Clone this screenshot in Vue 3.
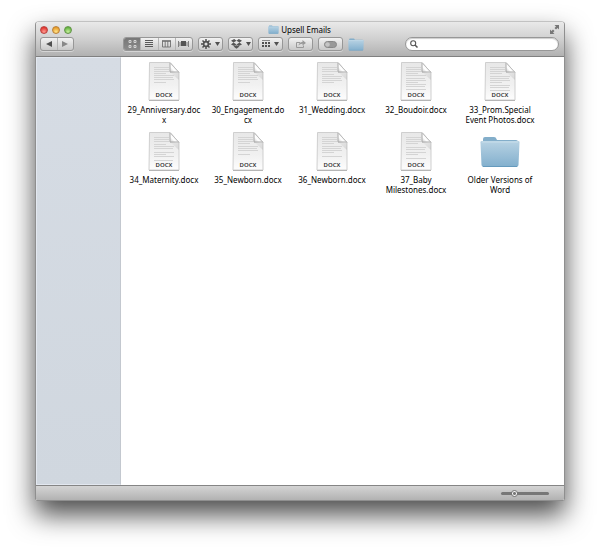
<script setup>
import { ref } from 'vue'

const size = ref(24)
const query = ref('')
const view = ref('icons')
const views = ['icons', 'list', 'columns', 'flow']

const files = [
  { lines: ['29_Anniversary.doc', 'x'], text: [5, 7, 9, 11, 13, 15, 17, 20] },
  { lines: ['30_Engagement.do', 'cx'], text: [5, 7, 9, 11, 13, 15, 17, 20] },
  { lines: ['31_Wedding.docx'], text: [5, 7, 9, 12, 14, 16, 18, 20] },
  { lines: ['32_Boudoir.docx'], text: [5, 7, 9, 11, 13, 16, 18, 20, 22, 24, 27] },
  { lines: ['33_Prom.Special', 'Event Photos.docx'], text: [5, 7, 9, 11, 14, 16, 18, 20, 23, 25, 28] },
  { lines: ['34_Maternity.docx'], text: [5, 7, 9, 12, 14, 16, 20, 22, 24, 28] },
  { lines: ['35_Newborn.docx'], text: [5, 7, 9, 11, 14, 16, 18, 22] },
  { lines: ['36_Newborn.docx'], text: [5, 7, 9, 11, 14, 16, 18, 20, 24] },
  { lines: ['37_Baby', 'Milestones.docx'], text: [5, 7, 9, 11, 15, 17, 20, 22, 26] },
  { lines: ['Older Versions of', 'Word'], folder: true }
]
const lineWidth = (y, i) => (y < 11 ? 15 : [20, 19, 20, 12][i % 4])
</script>

<template>
  <main class="window">
    <svg class="defs" width="0" height="0" aria-hidden="true">
      <defs>
        <linearGradient id="paper" x1="0" y1="0" x2="0" y2="1">
          <stop offset="0" stop-color="#e8e8e8" />
          <stop offset=".6" stop-color="#f1f1f1" />
          <stop offset="1" stop-color="#fdfdfd" />
        </linearGradient>
        <linearGradient id="curl" x1="0" y1="1" x2="1" y2="0">
          <stop offset="0" stop-color="#c4c4c4" />
          <stop offset=".35" stop-color="#fff" />
          <stop offset="1" stop-color="#ddd" />
        </linearGradient>
        <linearGradient id="fold" x1="0" y1="0" x2="1" y2="1">
          <stop offset="0" stop-color="#ddd" />
          <stop offset="1" stop-color="#777" />
        </linearGradient>
        <linearGradient id="blue" x1="0" y1="0" x2="0" y2="1">
          <stop offset="0" stop-color="#b7d2e3" />
          <stop offset="1" stop-color="#82afcd" />
        </linearGradient>
        <symbol id="folder" viewBox="0 0 40 32">
          <path d="M3 8V3Q3 1 5 1H14Q16 1 16.500 3L17 4H36Q38 4 38 6V9H3Z" fill="#83aeca" />
          <path d="M.5 7Q0 5 2 5H38Q40 5 39.500 7L38.500 29Q38.500 31 36 31H4Q1.500 31 1.500 29Z" fill="url(#blue)" />
          <path d="M2 6H38" stroke="#c8deeb" />
          <path d="M3 30.500H37" stroke="#659abd" />
        </symbol>
      </defs>
    </svg>

    <header class="toolbar">
      <div class="titlebar">
        <div class="lights">
          <button class="light red" aria-label="Close"></button>
          <button class="light yellow" aria-label="Minimize"></button>
          <button class="light green" aria-label="Zoom"></button>
        </div>
        <h1><svg width="11" height="9"><use href="#folder" /></svg>Upsell Emails</h1>
        <button class="expand" aria-label="Full screen">
          <svg width="9" height="9" viewBox="0 0 9 9"><path d="M4.500 0H9V4.500L7.500 3L6 4.500L4.500 3L6 1.500ZM0 4.500L1.500 6L3 4.500L4.500 6L3 7.500L4.500 9H0Z" fill="#777" /></svg>
        </button>
      </div>
      <nav class="tools">
        <div class="group history">
          <button aria-label="Back"><svg width="6" height="6" viewBox="0 0 6 6"><path d="M6 0V6L0 3Z" fill="#505050" /></svg></button>
          <button aria-label="Forward"><svg width="6" height="6" viewBox="0 0 6 6"><path d="M0 0V6L6 3Z" fill="#888" /></svg></button>
        </div>
        <div class="group views">
          <button v-for="v in views" :key="v" :class="{ active: view === v }" :aria-label="v" @click="view = v">
            <svg v-if="v === 'icons'" width="9" height="8" viewBox="0 0 9 8"><path d="M1 .5H3V2.500H1ZM6 .5H8V2.500H6ZM1 5.500H3V7.500H1ZM6 5.500H8V7.500H6Z" fill="none" stroke="#d4d4d4" /></svg>
            <svg v-else-if="v === 'list'" width="8" height="8" viewBox="0 0 8 8" shape-rendering="crispEdges"><path d="M0 .5H8M0 2.500H8M0 4.500H8M0 6.500H8" stroke="#5a5a5a" /></svg>
            <svg v-else-if="v === 'columns'" width="9" height="8" viewBox="0 0 9 8"><path d="M0 1H9" stroke="#666" stroke-width="1.500" /><path d="M.5 1V7H8.500V1M3.200 1V7M5.800 1V7" fill="none" stroke="#707070" stroke-width=".9" /></svg>
            <svg v-else width="11" height="8" viewBox="0 0 11 8"><path d="M3 1H8V6H3Z" fill="#555" /><path d="M.5 1V7M10.500 1V7M2 2V6M9 2V6" stroke="#808080" /></svg>
          </button>
        </div>
        <button class="pill" aria-label="Actions">
          <svg width="10" height="10" viewBox="0 0 10 10"><path d="M5 0V10M0 5H10M1.500 1.500L8.500 8.500M8.500 1.500L1.500 8.500" stroke="#505050" stroke-width="1.500" /><circle cx="5" cy="5" r="2.400" fill="#ddd" stroke="#505050" stroke-width="1.700" /></svg>
          <svg width="5" height="4"><path d="M0 0H5L2.500 4Z" fill="#505050" /></svg>
        </button>
        <button class="pill" aria-label="Dropbox">
          <svg width="11" height="10" viewBox="0 0 11 10"><path d="M3.200 0L5.500 1.700L2.500 3.600L0 1.800ZM7.800 0L11 1.800L8.500 3.600L5.500 1.700ZM0 5.400L2.500 3.600L5.500 5.500L3.200 7.100ZM11 5.400L8.500 3.600L5.500 5.500L7.800 7.100ZM2.500 7.500L5.500 6.300L8.500 7.500L5.500 9.800Z" fill="#555" /></svg>
          <svg width="5" height="4"><path d="M0 0H5L2.500 4Z" fill="#505050" /></svg>
        </button>
        <button class="pill" aria-label="Arrange">
          <svg width="8" height="8" viewBox="0 0 8 8"><path d="M0 .5H8" stroke="#888" /><path d="M0 3H8M0 6H8" stroke="#505050" stroke-width="2" stroke-dasharray="2 1" /></svg>
          <svg width="5" height="4"><path d="M0 0H5L2.500 4Z" fill="#505050" /></svg>
        </button>
        <button class="pill" aria-label="Share">
          <svg width="10" height="8" viewBox="0 0 10 8"><path d="M4 2.500H.5V7.500H7.500V5.500" fill="none" stroke="#999" /><path d="M2.500 5.500Q3 2 6.500 2V0L10 3L6.500 5.500V3.800Q4 3.700 2.500 5.500Z" fill="#999" /></svg>
        </button>
        <button class="pill" aria-label="Tags">
          <svg width="13" height="7" viewBox="0 0 13 7"><rect x=".5" y=".5" width="12" height="6" rx="3" fill="#999" stroke="#888" /><circle cx="3.500" cy="3.500" r="2.300" fill="#c5c5c5" /></svg>
        </button>
        <button class="shortcut" aria-label="Folder"><svg width="16" height="13"><use href="#folder" /></svg></button>
        <label class="search">
          <svg width="8" height="8" viewBox="0 0 8 8"><circle cx="3.200" cy="3.200" r="2.500" fill="none" stroke="#555" stroke-width="1.100" /><path d="M5 5L7.500 7.500" stroke="#555" stroke-width="1.500" /></svg>
          <input v-model="query" type="text" aria-label="Search">
        </label>
      </nav>
    </header>

    <div class="content">
      <aside></aside>
      <ul class="files">
        <li v-for="file in files" :key="file.lines[0]">
          <svg v-if="file.folder" class="icon" width="40" height="39" viewBox="0 0 40 39"><use href="#folder" y="4" width="40" height="32" /></svg>
          <svg v-else class="icon" width="32" height="39" viewBox="0 0 32 39">
            <path d="M1.500 .5H22L31 10.500V38H1Z" fill="url(#paper)" stroke="#cfcfcf" />
            <path d="M1 38.500H31" stroke="#b5b5b5" />
            <path v-for="(y, i) in file.text" :key="y" :d="`M6 ${y + .5}h${lineWidth(y, i)}`" stroke="#d4d4d4" />
            <path d="M22 10L31 18V10.500Z" fill="url(#fold)" opacity=".2" />
            <path d="M22 1L31 10.500H22Z" fill="url(#curl)" />
            <path d="M22 1V10H31" fill="none" stroke="#a8a8a8" />
            <path d="M22 .5L31 10.500" stroke="#bbb" />
            <text x="16" y="35" text-anchor="middle">DOCX</text>
          </svg>
          <p><span v-for="line in file.lines" :key="line">{{ line }}</span></p>
        </li>
      </ul>
    </div>

    <footer>
      <input v-model="size" type="range" min="0" max="100" aria-label="Icon size">
    </footer>
  </main>
</template>

<style>
body {
  margin: 0;
  background: #fff;
}
</style>

<style scoped>
* {
  box-sizing: border-box;
}
.window {
  display: flex;
  flex-direction: column;
  min-height: calc(100vh - 70px);
  margin: 21px 35px 49px;
  border: 1px solid #8f8f8f;
  border-top-color: #c2c2c2;
  border-radius: 4px 4px 2px 2px;
  overflow: clip;
  font-family: "Noto Sans", "Open Sans", sans-serif;
  color: #000;
  box-shadow: 0 14px 27px rgba(0, 0, 0, .7);
}
.defs {
  position: absolute;
}
button {
  display: flex;
  align-items: center;
  justify-content: center;
  padding: 0;
  border: 0;
  background: none;
}
svg {
  flex: none;
  display: block;
}
.toolbar {
  padding: 0 5px 5px 4px;
  background: linear-gradient(#e9e9e9, #d0d0d0 50%, #b1b1b1);
  border-bottom: 1px solid #808080;
}
.titlebar {
  display: grid;
  grid-template-columns: 1fr auto 1fr;
  align-items: center;
  height: 15px;
}
.lights {
  display: flex;
  gap: 4px;
}
.light {
  width: 8px;
  height: 8px;
  border-radius: 50%;
  border: 1px solid;
}
.red {
  background: radial-gradient(circle at 50% 80%, #ff9d93, #e2352f 75%);
  border-color: #b9433f;
}
.yellow {
  background: radial-gradient(circle at 50% 80%, #ffe58a, #e79b29 75%);
  border-color: #b98038;
}
.green {
  background: radial-gradient(circle at 50% 80%, #c9f19e, #63b33f 75%);
  border-color: #639449;
}
h1 {
  display: flex;
  align-items: center;
  gap: 2px;
  margin: 0;
  font-size: 8px;
  line-height: 12px;
  font-weight: 400;
}
.expand {
  justify-self: end;
}
.tools {
  display: flex;
  align-items: center;
  gap: 5px;
}
.group,
.pill {
  height: 14px;
  border: 1px solid #979797;
  border-radius: 3px;
  background: linear-gradient(#f2f2f2, #c9c9c9);
  box-shadow: 0 1px 0 rgba(255, 255, 255, .4);
}
.group {
  display: flex;
  overflow: hidden;
}
.group button {
  flex: 1;
}
.group button + button {
  border-left: 1px solid #b5b5b5;
}
.history {
  width: 34px;
}
.views {
  width: 70px;
  margin-left: 44px;
}
.views .active {
  background: linear-gradient(#777, #8b8b8b);
}
.pill {
  width: 25px;
  gap: 4px;
}
.shortcut {
  margin-right: 36px;
}
.search {
  display: flex;
  flex: 1;
  align-items: center;
  gap: 3px;
  height: 14px;
  padding: 0 4px;
  border: 1px solid #979797;
  border-radius: 7px;
  background: #fff;
  box-shadow: inset 0 1px 1px #ccc;
}
.search input {
  flex: 1;
  min-width: 0;
  height: 10px;
  padding: 0;
  border: 0;
  outline: 0;
  background: none;
  font: inherit;
  font-size: 8px;
}
.content {
  display: flex;
  flex: 1;
  background: #fff;
}
aside {
  width: 85px;
  border: 1px solid #e3e8f0;
  border-right-color: #c3c8cf;
  background: linear-gradient(#d6dce4, #d0d7df);
}
.files {
  display: grid;
  flex: 1;
  grid-template-columns: repeat(auto-fill, 84px);
  grid-auto-rows: 70px;
  align-content: start;
  margin: 0;
  padding: 5px 0 0 1px;
  list-style: none;
}
li {
  display: flex;
  flex-direction: column;
  align-items: center;
}
.icon text {
  font-family: "Noto Sans", sans-serif;
  font-size: 6px;
  font-weight: 600;
  fill: #333;
}
p {
  margin: 4px 0 0;
  font-size: 8px;
  line-height: 10px;
  text-align: center;
  white-space: nowrap;
}
p span {
  display: block;
}
footer {
  display: flex;
  align-items: center;
  justify-content: flex-end;
  height: 15px;
  padding-right: 15px;
  border-top: 1px solid #858585;
  background: linear-gradient(#d4d4d4, #b2b2b2);
}
footer input {
  appearance: none;
  width: 48px;
  height: 8px;
  margin: 0;
  background: none;
}
footer input::-webkit-slider-runnable-track {
  height: 3px;
  border-radius: 2px;
  background: #777;
}
footer input::-webkit-slider-thumb {
  appearance: none;
  width: 7px;
  height: 7px;
  margin-top: -2px;
  border: 1px solid #777;
  border-radius: 50%;
  background: radial-gradient(#777 1px, #f4f4f4 2px);
}
</style>
